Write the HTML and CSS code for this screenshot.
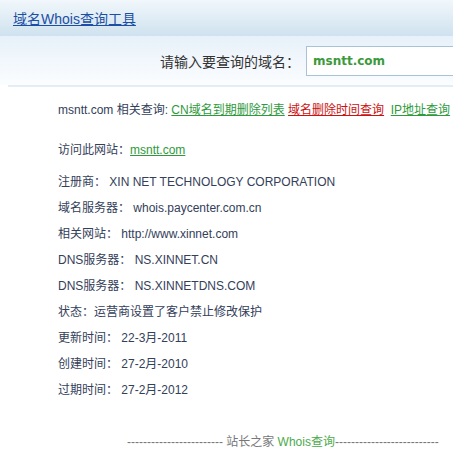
FILE: index.html
```html
<!DOCTYPE html>
<html lang="zh-CN">
<head>
  <meta charset="UTF-8">
  <title>域名Whois查询工具</title>
  <link rel="stylesheet" href="styles.css">
</head>
<body>

<div class="header">
  <a href="#" class="title">域名Whois查询工具</a>
</div>

<div class="search">
  <label for="domain">请输入要查询的域名：</label>
  <input type="text" id="domain" value="msntt.com">
</div>
<div class="divider"></div>

<div class="content">
  <p class="related">msntt.com 相关查询: <a href="#" class="green">CN域名到期删除列表</a> <a href="#" class="red">域名删除时间查询</a> &nbsp;<a href="#" class="green">IP地址查询</a></p>
  <p class="visit">访问此网站：<a href="#" class="green">msntt.com</a></p>

  <div class="info">
    <p>注册商： XIN NET TECHNOLOGY CORPORATION</p>
    <p>域名服务器： whois.paycenter.com.cn</p>
    <p>相关网站： http://www.xinnet.com</p>
    <p>DNS服务器： NS.XINNET.CN</p>
    <p>DNS服务器： NS.XINNETDNS.COM</p>
    <p>状态：运营商设置了客户禁止修改保护</p>
    <p>更新时间： 22-3月-2011</p>
    <p>创建时间： 27-2月-2010</p>
    <p>过期时间： 27-2月-2012</p>
  </div>
</div>

<div class="footer">------------------------ 站长之家 <span class="green">Whois查询</span>--------------------------</div>

</body>
</html>
```

FILE: styles.css
```css
body {
  margin: 0;
  background-color: #fff;
  font-family: "Liberation Sans", "Noto Sans CJK SC", sans-serif;
  font-size: 12px;
  color: #33405a;
  overflow: hidden;
}

/* Title bar */
.header {
  height: 36px;
  padding-left: 13px;
  line-height: 38px;
  background: linear-gradient(#f1f7fb, #cfe2ef);
}

.title {
  color: #1c4fa3;
  font-size: 14px;
}

/* Search row */
.search {
  display: flex;
  align-items: center;
  height: 49px;
  padding-left: 160px;
  overflow: hidden;
  background: linear-gradient(#e7f1f9, #fbfdff);
}

.search label {
  flex-shrink: 0;
  width: 146px;
  font-size: 14px;
  color: #333;
  white-space: nowrap;
}

.search input {
  flex-shrink: 0;
  width: 200px;
  height: 30px;
  box-sizing: border-box;
  padding: 0 6px;
  border: 1px solid #a9c2d6;
  color: #3b9a3b;
  font-family: "DejaVu Sans", sans-serif;
  font-size: 12px;
  font-weight: bold;
  background: #fff;
}

.divider {
  height: 2px;
  margin-left: 8px;
  background-color: #e2edf5;
}

/* Results */
.content {
  padding: 10px 0 0 58px;
}

.content p {
  margin: 0;
  line-height: 26px;
  white-space: nowrap;
}

.related {
  margin-bottom: 14px !important;
}

.visit {
  margin-bottom: 6px !important;
}

a.green {
  color: #2e9a3c;
}

a.red {
  color: #cc1111;
}

.footer {
  margin-top: 26px;
  padding-left: 127px;
  line-height: 26px;
  color: #777;
  white-space: nowrap;
}

.footer .green {
  color: #4caa4c;
}
```
